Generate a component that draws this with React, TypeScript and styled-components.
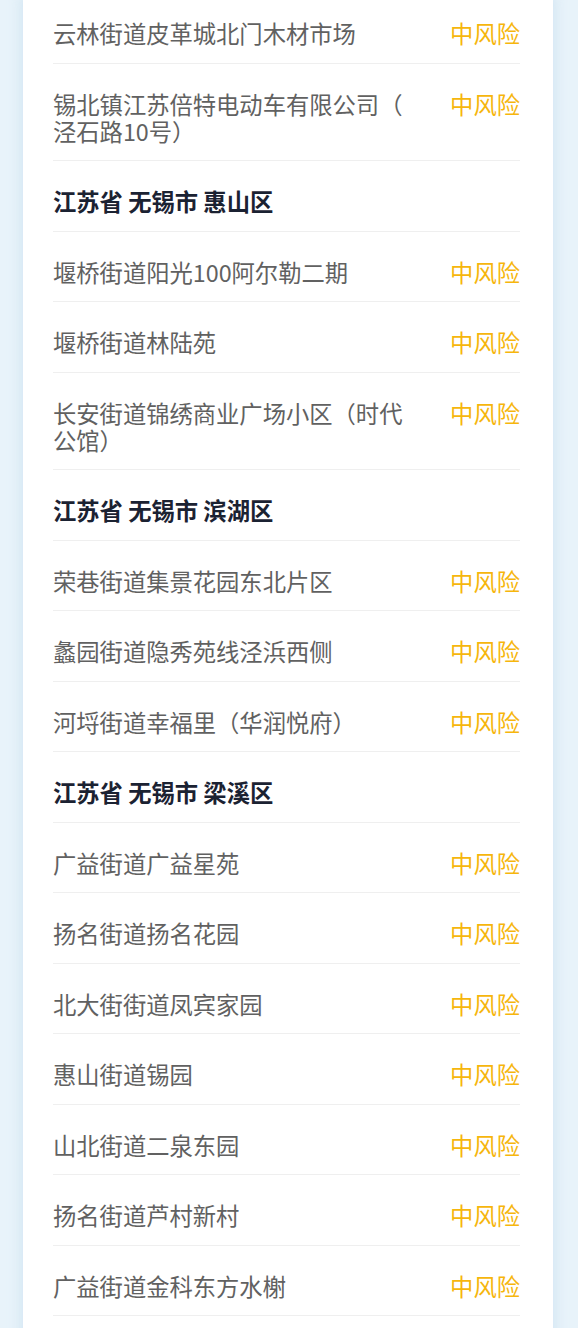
import React from "react";
import styled, { createGlobalStyle } from "styled-components";

const Global = createGlobalStyle`
  html, body {
    margin: 0;
    padding: 0;
    background: #e8f3fa;
  }
  body {
    font-family: "Noto Sans CJK SC", "Noto Sans", sans-serif;
    -webkit-font-smoothing: antialiased;
  }
`;

const Page = styled.div`
  height: 1328px;
  overflow: hidden;
  padding: 0 25px 0 23px;
  box-sizing: border-box;
`;

const Card = styled.div`
  background: #ffffff;
  margin-top: -7px;
  padding: 0 33px 0 30px;
  box-shadow: 0 0 14px rgba(170, 205, 228, 0.45);
  min-height: 1400px;
`;

const List = styled.ul`
  list-style: none;
  margin: 0;
  padding: 0;
`;

const Row = styled.li`
  display: flex;
  align-items: flex-start;
  justify-content: space-between;
  padding: 27px 0 15.5px;
  border-bottom: 1px solid #efefef;
`;

const Name = styled.span`
  width: 356px;
  font-size: 23.3px;
  line-height: 27px;
  color: #616161;
  line-break: anywhere;
`;

const Header = styled.span`
  font-size: 23.3px;
  line-height: 27px;
  font-weight: 700;
  color: #1b2232;
`;

const Risk = styled.span`
  font-size: 23.3px;
  line-height: 27px;
  color: #f6b60d;
  white-space: nowrap;
`;

type Item = { type: "h" | "i"; text: string };

const items: Item[] = [
  { type: "i", text: "云林街道皮革城北门木材市场" },
  { type: "i", text: "锡北镇江苏倍特电动车有限公司（泾石路10号）" },
  { type: "h", text: "江苏省 无锡市 惠山区" },
  { type: "i", text: "堰桥街道阳光100阿尔勒二期" },
  { type: "i", text: "堰桥街道林陆苑" },
  { type: "i", text: "长安街道锦绣商业广场小区（时代公馆）" },
  { type: "h", text: "江苏省 无锡市 滨湖区" },
  { type: "i", text: "荣巷街道集景花园东北片区" },
  { type: "i", text: "蠡园街道隐秀苑线泾浜西侧" },
  { type: "i", text: "河埒街道幸福里（华润悦府）" },
  { type: "h", text: "江苏省 无锡市 梁溪区" },
  { type: "i", text: "广益街道广益星苑" },
  { type: "i", text: "扬名街道扬名花园" },
  { type: "i", text: "北大街街道凤宾家园" },
  { type: "i", text: "惠山街道锡园" },
  { type: "i", text: "山北街道二泉东园" },
  { type: "i", text: "扬名街道芦村新村" },
  { type: "i", text: "广益街道金科东方水榭" },
];

export default function App() {
  return (
    <>
      <Global />
      <Page>
        <Card>
          <List>
            {items.map((it, i) =>
              it.type === "h" ? (
                <Row key={i}>
                  <Header>{it.text}</Header>
                </Row>
              ) : (
                <Row key={i}>
                  <Name>{it.text}</Name>
                  <Risk>中风险</Risk>
                </Row>
              )
            )}
          </List>
        </Card>
      </Page>
    </>
  );
}
